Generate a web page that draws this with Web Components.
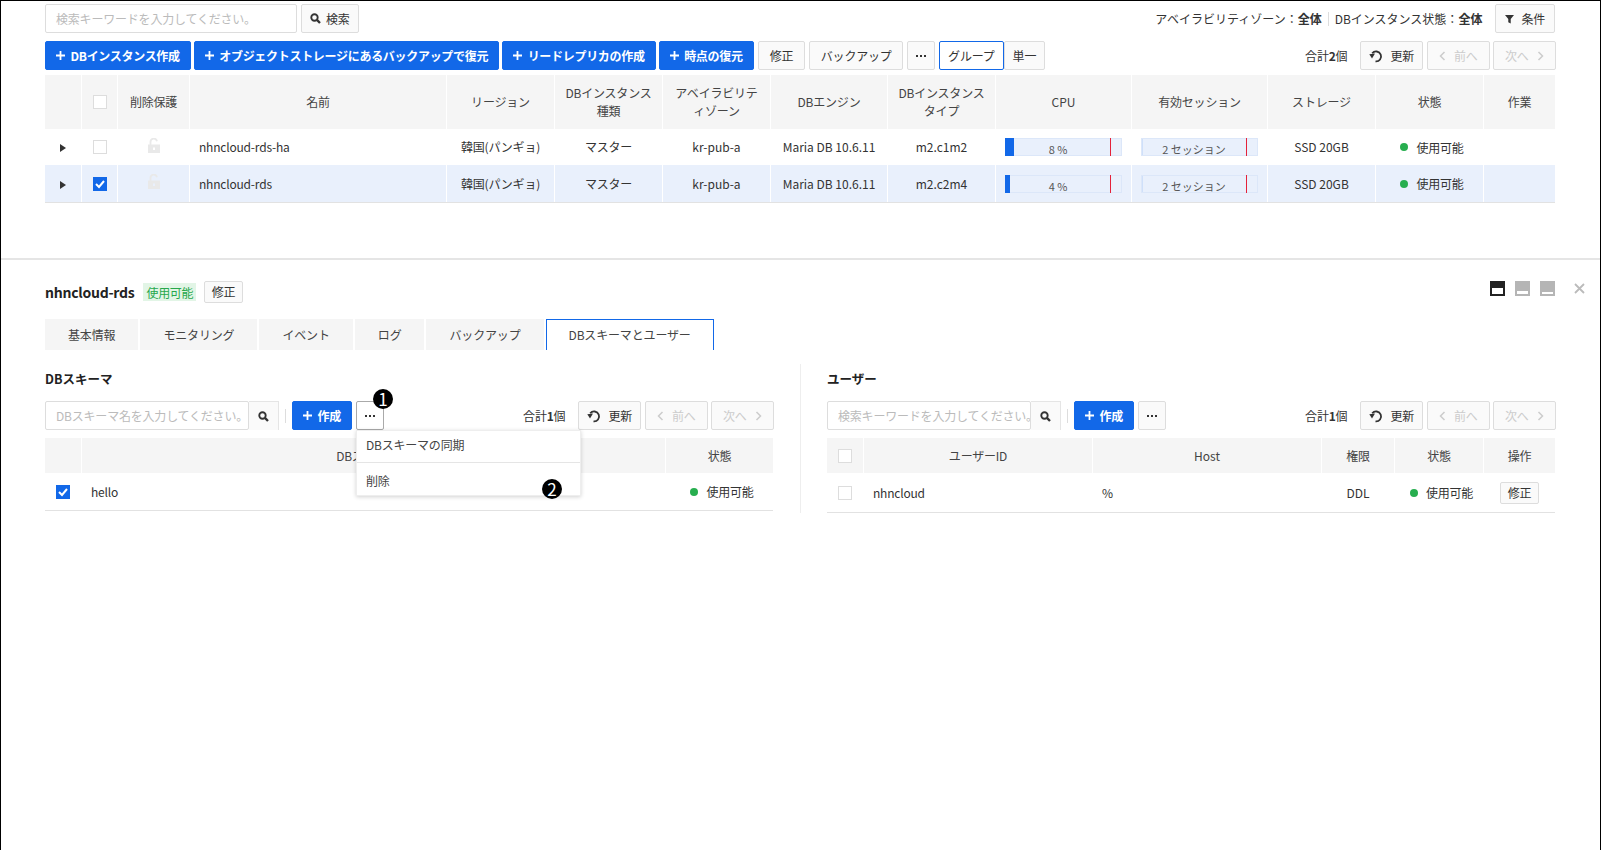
<!DOCTYPE html>
<html lang="ja">
<head>
<meta charset="UTF-8">
<title>RDS Instances</title>
<style>
  html, body { margin: 0; height: 100%; background: #fff; overflow: hidden; }
  body { font: 12px/18px "Noto Sans CJK JP", "Noto Sans", sans-serif; color: #333; letter-spacing: -0.2px; }
</style>
</head>
<body>
<rds-page>
  <div slot="top">
    <rds-bar>
      <rds-input style="width:252px">検索キーワードを入力してください。</rds-input>
      <rds-button gap="5" pad="8" style="margin-left:4px"><rds-icon name="search"></rds-icon>検索</rds-button>
      <rds-bar-end>
        <span style="letter-spacing:0">アベイラビリティゾーン：<b>全体</b></span><rds-sep></rds-sep><span style="letter-spacing:0">DBインスタンス状態：<b>全体</b></span>
        <rds-button gap="7" pad="9" style="margin-left:13px"><rds-icon name="filter"></rds-icon>条件</rds-button>
      </rds-bar-end>
    </rds-bar>
    <rds-bar style="margin-top:8px;gap:3px">
      <rds-button kind="primary"><rds-icon name="plus"></rds-icon>DBインスタンス作成</rds-button>
      <rds-button kind="primary"><rds-icon name="plus"></rds-icon>オブジェクトストレージにあるバックアップで復元</rds-button>
      <rds-button kind="primary"><rds-icon name="plus"></rds-icon>リードレプリカの作成</rds-button>
      <rds-button kind="primary"><rds-icon name="plus"></rds-icon>時点の復元</rds-button>
      <rds-button style="margin-left:1px">修正</rds-button>
      <rds-button style="margin-left:1px" pad="10.5">バックアップ</rds-button>
      <rds-button style="margin-left:1px" pad="7"><rds-icon name="dots"></rds-icon></rds-button>
      <rds-button kind="active" style="margin-left:1px" pad="8">グループ</rds-button>
      <rds-button pad="8" style="margin-left:-3px">単一</rds-button>
      <rds-bar-end>
        <span style="margin-right:13px">合計<b>2</b>個</span>
        <rds-pager></rds-pager>
      </rds-bar-end>
    </rds-bar>
    <rds-grid style="margin-top:5px;--cols:36px 36px 72px 257px 108px 108px 108px 117px 108px 136px 136px 108px 108px 72px">
      <rds-row head style="--h:54px">
        <rds-cell></rds-cell><rds-cell><rds-check></rds-check></rds-cell><rds-cell>削除保護</rds-cell><rds-cell>名前</rds-cell><rds-cell>リージョン</rds-cell><rds-cell>DBインスタンス<br>種類</rds-cell><rds-cell>アベイラビリティゾーン</rds-cell><rds-cell>DBエンジン</rds-cell><rds-cell>DBインスタンス<br>タイプ</rds-cell><rds-cell latin>CPU</rds-cell><rds-cell>有効セッション</rds-cell><rds-cell>ストレージ</rds-cell><rds-cell>状態</rds-cell><rds-cell>作業</rds-cell>
      </rds-row>
      <rds-row style="--h:36px">
        <rds-cell><rds-icon name="caret"></rds-icon></rds-cell><rds-cell><rds-check></rds-check></rds-cell><rds-cell><rds-icon name="lock"></rds-icon></rds-cell><rds-cell align="left">nhncloud-rds-ha</rds-cell><rds-cell>韓国(パンギョ)</rds-cell><rds-cell>マスター</rds-cell><rds-cell latin>kr-pub-a</rds-cell><rds-cell latin>Maria DB 10.6.11</rds-cell><rds-cell latin>m2.c1m2</rds-cell><rds-cell><rds-gauge fill="9">8 %</rds-gauge></rds-cell><rds-cell><rds-gauge>2 セッション</rds-gauge></rds-cell><rds-cell latin>SSD 20GB</rds-cell><rds-cell><rds-status>使用可能</rds-status></rds-cell><rds-cell></rds-cell>
      </rds-row>
      <rds-row selected style="--h:38px">
        <rds-cell><rds-icon name="caret"></rds-icon></rds-cell><rds-cell><rds-check checked></rds-check></rds-cell><rds-cell><rds-icon name="lock"></rds-icon></rds-cell><rds-cell align="left">nhncloud-rds</rds-cell><rds-cell>韓国(パンギョ)</rds-cell><rds-cell>マスター</rds-cell><rds-cell latin>kr-pub-a</rds-cell><rds-cell latin>Maria DB 10.6.11</rds-cell><rds-cell latin>m2.c2m4</rds-cell><rds-cell><rds-gauge fill="5">4 %</rds-gauge></rds-cell><rds-cell><rds-gauge>2 セッション</rds-gauge></rds-cell><rds-cell latin>SSD 20GB</rds-cell><rds-cell><rds-status>使用可能</rds-status></rds-cell><rds-cell></rds-cell>
      </rds-row>
    </rds-grid>
  </div>

  <div slot="detail">
    <rds-title>
      <b>nhncloud-rds</b>
      <rds-badge>使用可能</rds-badge>
      <rds-button size="small" style="margin-left:-1px">修正</rds-button>
      <rds-panel-tools></rds-panel-tools>
    </rds-title>
    <rds-tabs>
      <rds-tab>基本情報</rds-tab>
      <rds-tab>モニタリング</rds-tab>
      <rds-tab>イベント</rds-tab>
      <rds-tab>ログ</rds-tab>
      <rds-tab>バックアップ</rds-tab>
      <rds-tab active>DBスキーマとユーザー</rds-tab>
    </rds-tabs>
    <rds-split>
      <section slot="left">
        <rds-heading>DBスキーマ</rds-heading>
        <rds-bar>
          <rds-input search style="width:234px">DBスキーマ名を入力してください。</rds-input>
          <rds-sep style="margin:0 6px"></rds-sep>
          <rds-button kind="primary"><rds-icon name="plus"></rds-icon>作成</rds-button>
          <rds-menu-anchor style="margin-left:4px">
            <rds-button pad="7" kind="pressed"><rds-icon name="dots"></rds-icon></rds-button>
            <rds-marker style="left:17px;top:-12px">1</rds-marker>
            <rds-menu>
              <rds-menu-item>DBスキーマの同期</rds-menu-item>
              <rds-menu-item>削除</rds-menu-item>
              <rds-marker style="left:185px;top:48px">2</rds-marker>
            </rds-menu>
          </rds-menu-anchor>
          <rds-bar-end>
            <span style="margin-right:13px">合計<b>1</b>個</span>
            <rds-pager></rds-pager>
          </rds-bar-end>
        </rds-bar>
        <rds-grid style="margin-top:8px;--cols:36px 1fr 108px">
          <rds-row head style="--h:35px">
            <rds-cell></rds-cell><rds-cell>DBスキーマ名</rds-cell><rds-cell>状態</rds-cell>
          </rds-row>
          <rds-row style="--h:38px">
            <rds-cell><rds-check checked></rds-check></rds-cell><rds-cell align="left">hello</rds-cell><rds-cell><rds-status>使用可能</rds-status></rds-cell>
          </rds-row>
        </rds-grid>
      </section>
      <section slot="right">
        <rds-heading>ユーザー</rds-heading>
        <rds-bar>
          <rds-input search style="width:234px">検索キーワードを入力してください。</rds-input>
          <rds-sep style="margin:0 6px"></rds-sep>
          <rds-button kind="primary"><rds-icon name="plus"></rds-icon>作成</rds-button>
          <rds-button pad="7" style="margin-left:4px"><rds-icon name="dots"></rds-icon></rds-button>
          <rds-bar-end>
            <span style="margin-right:13px">合計<b>1</b>個</span>
            <rds-pager></rds-pager>
          </rds-bar-end>
        </rds-bar>
        <rds-grid style="margin-top:8px;--cols:36px 229px 229px 73px 89px 72px">
          <rds-row head style="--h:35px">
            <rds-cell><rds-check></rds-check></rds-cell><rds-cell>ユーザーID</rds-cell><rds-cell latin>Host</rds-cell><rds-cell>権限</rds-cell><rds-cell>状態</rds-cell><rds-cell>操作</rds-cell>
          </rds-row>
          <rds-row style="--h:40px">
            <rds-cell><rds-check></rds-check></rds-cell><rds-cell align="left">nhncloud</rds-cell><rds-cell align="left">%</rds-cell><rds-cell latin>DDL</rds-cell><rds-cell><rds-status>使用可能</rds-status></rds-cell><rds-cell><rds-button size="small">修正</rds-button></rds-cell>
          </rds-row>
        </rds-grid>
      </section>
    </rds-split>
  </div>
</rds-page>

<script>
  const ICONS = {
    search: '<svg width="11" height="11" viewBox="0 0 13 13"><circle cx="5.3" cy="5.3" r="3.8" fill="none" stroke="#333" stroke-width="2.2"/><path d="M8.2 8.2l3.6 3.6" stroke="#333" stroke-width="2.8"/></svg>',
    plus: '<svg width="9" height="9" viewBox="0 0 9 9"><path d="M0 4.5h9M4.5 0v9" stroke="currentColor" stroke-width="1.8"/></svg>',
    dots: '<svg width="12" height="12" viewBox="0 0 12 12" fill="#333"><rect x="1" y="5" width="2" height="2"/><rect x="5" y="5" width="2" height="2"/><rect x="9" y="5" width="2" height="2"/></svg>',
    filter: '<svg width="9" height="10" viewBox="0 0 11 12" fill="#333"><path d="M0 1h11L7 6v5.500L4 10V6z"/></svg>',
    undo: '<svg width="14" height="14" viewBox="0 0 14 14"><path d="M3.200 4.300A5 5 0 1 1 6.500 12.400" fill="none" stroke="#333" stroke-width="1.800"/><path d="M0.300 5.200L6 4.600 3 9.600z" fill="#333"/></svg>',
    left: '<svg width="7" height="10" viewBox="0 0 7 10"><path d="M5.500 1L1.500 5l4 4" fill="none" stroke="#ccc" stroke-width="1.500"/></svg>',
    right: '<svg width="7" height="10" viewBox="0 0 7 10"><path d="M1.500 1l4 4-4 4" fill="none" stroke="#ccc" stroke-width="1.500"/></svg>',
    lock: '<svg width="12" height="15" viewBox="0 0 12 15"><path d="M2.500 7V4a3.300 3.300 0 0 1 6.500-.8" fill="none" stroke="#e9e9e9" stroke-width="1.800"/><path fill-rule="evenodd" d="M0 6.500h12V15H0zM5 9.500v2.500h2V9.500z" fill="#e9e9e9"/></svg>',
    caret: '<svg width="6" height="8" viewBox="0 0 6 8"><path d="M0 0l6 4-6 4z" fill="#333"/></svg>'
  };

  // small helper, every element here is just markup + styles in an open root
  function element(tag, css, html, init) {
    customElements.define(tag, class extends HTMLElement {
      constructor() {
        super();
        this.attachShadow({ mode: 'open' }).innerHTML = `<style>${css}</style>${html}`;
      }
      connectedCallback() {
        if (init) init(this);
      }
    });
  }

  element('rds-page', `
    :host { display: flex; flex-direction: column; box-sizing: border-box; height: 850px; border: 1px solid #000; border-bottom: 0; }
    .top { height: 257px; box-sizing: border-box; padding: 3px 45px 0 44px; }
    .detail { flex: 1; border-top: 2px solid #e5e5e5; padding: 21px 45px 0 44px; }
  `, `<div class="top"><slot name="top"></slot></div><div class="detail"><slot name="detail"></slot></div>`);

  element('rds-bar', `:host { display: flex; align-items: center; height: 29px; }`, `<slot></slot>`);
  element('rds-bar-end', `:host { display: flex; align-items: center; margin-left: auto; }`, `<slot></slot>`);
  element('rds-sep', `:host { display: block; width: 1px; height: 14px; background: #ddd; margin: 0 6px; }`, ``);

  element('rds-button', `
    :host { display: inline-flex; flex: none; }
    button { display: inline-flex; align-items: center; justify-content: center; gap: var(--gap, 6px); box-sizing: border-box; height: 29px;
      padding: 0 var(--pad, 11px); border: 1px solid #ddd; border-radius: 2px; background: #fafafa; color: #333;
      font: inherit; letter-spacing: inherit; white-space: nowrap; }
    :host([kind="primary"]) button { background: #1268e8; border-color: #1268e8; color: #fff; font-weight: 700; letter-spacing: -0.3px; padding: 0 10px; gap: 5.500px; }
    :host([kind="active"]) button { background: #fff; border-color: #1268e8; }
    :host([kind="pressed"]) button { background: #fff; border-color: #aaa; }
    :host([kind="disabled"]) button { color: #ccc; background: #fafafa; }
    :host([size="small"]) button { height: 22px; padding: 0 6.500px; font-size: 12px; }
  `, `<button type="button"><slot></slot></button>`, el => {
    if (el.hasAttribute('pad')) el.style.setProperty('--pad', el.getAttribute('pad') + 'px');
    if (el.hasAttribute('gap')) el.style.setProperty('--gap', el.getAttribute('gap') + 'px');
  });

  element('rds-icon', `:host { display: inline-flex; align-items: center; justify-content: center; } svg { display: block; }`, `<span id="i" style="display:contents"></span>`, el => {
    el.shadowRoot.getElementById('i').innerHTML = ICONS[el.getAttribute('name')] || '';
  });

  element('rds-input', `
    :host { display: flex; flex: none; box-sizing: border-box; height: 29px; }
    .box { flex: 1; min-width: 0; display: flex; align-items: center; box-sizing: border-box; padding: 0 10px; border: 1px solid #ddd; border-radius: 2px; background: #fff; color: #bbb; white-space: nowrap; overflow: hidden; }
    .go { display: none; flex: none; width: 29px; align-items: center; justify-content: center; background: #fafafa; border: solid #e5e5e5; border-width: 1px 1px 0 0; }
    :host([search]) .go { display: flex; }
  `, `<div class="box"><slot></slot></div><div class="go"><rds-icon name="search"></rds-icon></div>`);

  element('rds-pager', `
    :host { display: inline-flex; gap: 4px; }
    rds-button[kind="disabled"] { width: 62px; }
  `, `
    <rds-button pad="8" gap="7"><rds-icon name="undo"></rds-icon>更新</rds-button>
    <rds-button kind="disabled" pad="11" gap="8"><rds-icon name="left"></rds-icon>前へ</rds-button>
    <rds-button kind="disabled" pad="11" gap="8">次へ<rds-icon name="right"></rds-icon></rds-button>
  `);

  element('rds-grid', `:host { display: block; }`, `<slot></slot>`);

  element('rds-row', `
    :host { display: grid; grid-template-columns: var(--cols); height: var(--h, 36px); box-sizing: border-box; }
    :host([head]) { background: #f5f5f5; color: #444; }
    :host([selected]) { background: #e9f0fc; }
    :host(:last-child) { border-bottom: 1px solid #e2e2e2; }
  `, `<slot></slot>`);

  element('rds-cell', `
    :host { display: flex; align-items: center; justify-content: center; text-align: center; box-sizing: border-box; padding: 0 9px; border-left: 1px solid #fff; min-width: 0; }
    :host(:first-child) { border-left: 0; }
    :host([align="left"]) { justify-content: flex-start; text-align: left; }
    :host([latin]) { letter-spacing: 0; }
  `, `<div><slot></slot></div>`);

  element('rds-check', `
    :host { display: block; box-sizing: border-box; width: 14px; height: 14px; border: 1px solid #ddd; background: #fff; }
    :host([checked]) { background: #1268e8; border-color: #1268e8; }
    svg { display: none; width: 12px; height: 12px; }
    :host([checked]) svg { display: block; }
  `, `<svg viewBox="0 0 12 12"><path d="M2 6l3 3 5-6" fill="none" stroke="#fff" stroke-width="2"/></svg>`);

  element('rds-status', `
    :host { display: inline-flex; align-items: center; gap: 8px; margin-left: 5px; white-space: nowrap; }
    i { width: 8px; height: 8px; border-radius: 50%; background: #27ae4f; }
    span { padding-top: 1px; }
  `, `<i></i><span><slot></slot></span>`);

  element('rds-gauge', `
    :host { display: block; position: relative; box-sizing: border-box; width: 117px; height: 18px; background: #e9f0fc; border: 1px solid #dce7f9; }
    .range { display: block; box-sizing: border-box; width: 103px; height: 16px; border: solid #cfe0fa; border-width: 0 0 0 1px; text-align: center; font-size: 11px; letter-spacing: 0; line-height: 20px; color: #555; white-space: nowrap; overflow: hidden; }
    .fill { position: absolute; left: -1px; top: -1px; bottom: -1px; background: #1268e8; }
    .mark { position: absolute; left: 104px; top: -1px; bottom: -1px; width: 1px; background: #e4213a; }
  `, `<div class="range"><slot></slot></div><div class="fill" id="f"></div><div class="mark"></div>`, el => {
    el.shadowRoot.getElementById('f').style.width = (el.getAttribute('fill') || 0) + 'px';
  });

  element('rds-title', `
    :host { display: flex; align-items: center; height: 22px; font-size: 14px; letter-spacing: -0.25px; gap: 9px; color: #222; }
  `, `<slot></slot>`);
  element('rds-badge', `:host { display: block; height: 18px; padding: 0 3px; background: #e2f5e6; color: #27a84c; font-size: 12px; letter-spacing: -0.3px; line-height: 19px; }`, `<slot></slot>`);

  element('rds-panel-tools', `
    :host { display: flex; align-items: center; align-self: flex-start; height: 15px; margin-left: auto; margin-right: -30px; }
    i { display: block; box-sizing: border-box; position: relative; width: 15px; height: 15px; background: #b5b5b5; margin-right: 10px; }
    i.a { background: #222; }
    i::after { content: ""; position: absolute; left: 2px; right: 2px; bottom: 2px; background: #fff; }
    i.a::after { height: 6px; } i.b::after { height: 3px; } i.c::after { height: 2px; }
    svg { margin-left: 9px; }
  `, `<i class="a"></i><i class="b"></i><i class="c"></i><svg width="11" height="11" viewBox="0 0 11 11"><path d="M1 1l9 9M10 1l-9 9" stroke="#bbb" stroke-width="1.800"/></svg>`);

  element('rds-tabs', `:host { display: flex; gap: 2px; margin-top: 16px; letter-spacing: -0.16px; }`, `<slot></slot>`);
  element('rds-tab', `
    :host { display: flex; align-items: center; box-sizing: border-box; height: 31px; padding: 0 23px; background: #f5f5f5; color: #444; }
    :host([active]) { background: #fff; border: 1px solid #1268e8; border-bottom: 0; padding: 0 22px; }
  `, `<slot></slot>`);

  element('rds-split', `
    :host { display: grid; grid-template-columns: 728px 1px 728px; justify-content: space-between; margin-top: 14px; }
    i { background: #eee; height: 149px; }
    ::slotted(section) { min-width: 0; }
  `, `<slot name="left"></slot><i></i><slot name="right"></slot>`);
  element('rds-heading', `:host { display: block; height: 37px; line-height: 30px; font-weight: 700; font-size: 12.500px; letter-spacing: 0; color: #222; }`, `<slot></slot>`);

  element('rds-menu-anchor', `:host { display: inline-flex; position: relative; }`, `<slot></slot>`);
  element('rds-marker', `
    :host { position: absolute; z-index: 3; display: flex; align-items: center; justify-content: center; width: 20px; height: 20px; border-radius: 50%; background: #000; color: #fff; font-size: 17px; font-weight: 400; line-height: 20px; }
  `, `<slot></slot>`);
  element('rds-menu', `
    :host { position: absolute; z-index: 2; left: 0; top: 29px; box-sizing: border-box; width: 225px; height: 66px; background: #fff; border: 1px solid #eee; box-shadow: 0 1px 4px rgba(0,0,0,.18); }
  `, `<slot></slot>`);
  element('rds-menu-item', `
    :host { display: flex; align-items: center; box-sizing: border-box; height: 32px; padding: 4px 9px 0; color: #444; }
    :host(:first-child) { border-bottom: 1px solid #e5e5e5; padding: 0 9px 3px; }
  `, `<slot></slot>`);
</script>
</body>
</html>
